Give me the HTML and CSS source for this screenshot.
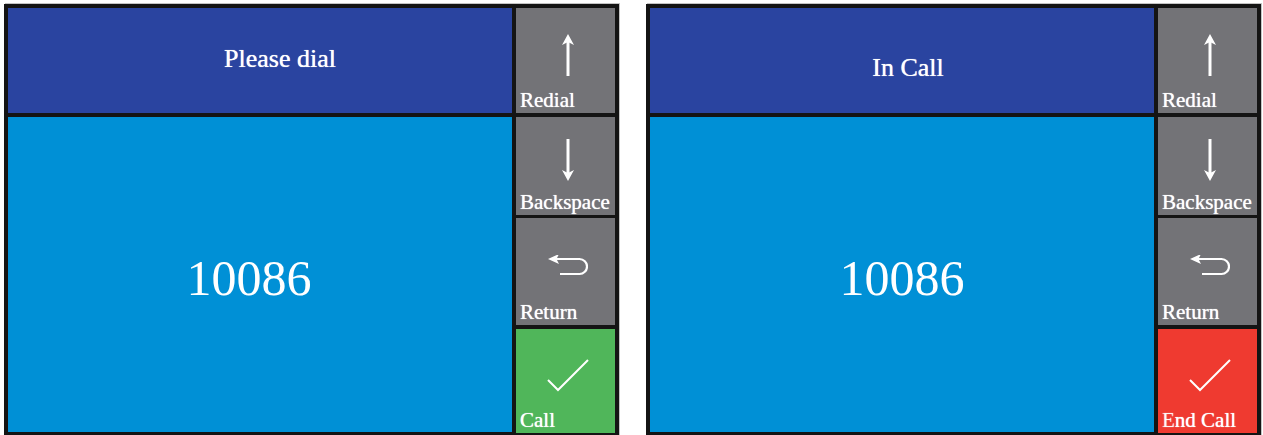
FILE: index.html
```html
<!DOCTYPE html>
<html>
<head>
    <title>Dial pad</title>
    <link rel="stylesheet" href="styles.css">
</head>
<body>
    <!-- Idle screen -->
    <div class="panel">
        <div class="main">
            <div class="title title-dial">Please dial</div>
            <div class="number number-dial">10086</div>
        </div>
        <div class="keys">
            <div class="key">
                <div class="key-icon">
                    <svg width="14" height="42" viewBox="0 0 14 42"><line x1="7" y1="42" x2="7" y2="7" stroke="#fff" stroke-width="3"/><polygon points="1,11 7,0 13,11 7,8" fill="#fff"/></svg>
                </div>
                <div class="key-label">Redial</div>
            </div>
            <div class="key">
                <div class="key-icon">
                    <svg width="14" height="42" viewBox="0 0 14 42"><line x1="7" y1="0" x2="7" y2="35" stroke="#fff" stroke-width="3"/><polygon points="1,31 7,42 13,31 7,34" fill="#fff"/></svg>
                </div>
                <div class="key-label">Backspace</div>
            </div>
            <div class="key">
                <div class="key-icon">
                    <svg width="40" height="21" viewBox="0 0 40 21"><path d="M7 4 H31.5 A7.5 7.5 0 0 1 31.5 19 H12" fill="none" stroke="#fff" stroke-width="2.2"/><polygon points="0,4 11,-1 8.5,4 11,9" fill="#fff"/></svg>
                </div>
                <div class="key-label">Return</div>
            </div>
            <div class="key key-call">
                <div class="key-icon">
                    <svg width="44" height="34" viewBox="0 0 44 34"><polyline points="2,22 12,32 42,2" fill="none" stroke="#fff" stroke-width="2"/></svg>
                </div>
                <div class="key-label">Call</div>
            </div>
        </div>
    </div>

    <!-- Active call screen -->
    <div class="panel">
        <div class="main">
            <div class="title title-call">In Call</div>
            <div class="number">10086</div>
        </div>
        <div class="keys">
            <div class="key">
                <div class="key-icon">
                    <svg width="14" height="42" viewBox="0 0 14 42"><line x1="7" y1="42" x2="7" y2="7" stroke="#fff" stroke-width="3"/><polygon points="1,11 7,0 13,11 7,8" fill="#fff"/></svg>
                </div>
                <div class="key-label">Redial</div>
            </div>
            <div class="key">
                <div class="key-icon">
                    <svg width="14" height="42" viewBox="0 0 14 42"><line x1="7" y1="0" x2="7" y2="35" stroke="#fff" stroke-width="3"/><polygon points="1,31 7,42 13,31 7,34" fill="#fff"/></svg>
                </div>
                <div class="key-label">Backspace</div>
            </div>
            <div class="key">
                <div class="key-icon">
                    <svg width="40" height="21" viewBox="0 0 40 21"><path d="M7 4 H31.5 A7.5 7.5 0 0 1 31.5 19 H12" fill="none" stroke="#fff" stroke-width="2.2"/><polygon points="0,4 11,-1 8.5,4 11,9" fill="#fff"/></svg>
                </div>
                <div class="key-label">Return</div>
            </div>
            <div class="key key-end">
                <div class="key-icon">
                    <svg width="44" height="34" viewBox="0 0 44 34"><polyline points="2,22 12,32 42,2" fill="none" stroke="#fff" stroke-width="2"/></svg>
                </div>
                <div class="key-label"><span class="faded">E</span>nd Call</div>
            </div>
        </div>
    </div>
</body>
</html>
```

FILE: styles.css
```css
body {
    margin: 0;
    padding: 4px 0 0 4px;
    display: flex;
    gap: 27px;
    background-color: #fff;
    font-family: "Liberation Serif", "DejaVu Serif", serif;
    color: #fff;
}
.panel {
    display: flex;
    gap: 4px;
    padding: 4px 4px 3px 4px;
    background-color: #141414;
    box-shadow: 1px -1px 0 #c4c4c4;
}
.main {
    width: 504px;
    display: flex;
    flex-direction: column;
    gap: 4px;
}
.title {
    height: 105px;
    background-color: #2a44a0;
    display: flex;
    justify-content: center;
    align-items: center;
    font-size: 26px;
    box-sizing: border-box;
    text-shadow: 0 0 0.7px #fff;
}
.title-dial {
    padding: 0 0 3px 40px;
}
.title-call {
    padding: 14px 0 0 12px;
}
.number {
    height: 315px;
    background-color: #0090d6;
    display: flex;
    justify-content: center;
    align-items: center;
    font-size: 50px;
    box-sizing: border-box;
    padding-top: 7px;
}
.number-dial {
    padding-right: 22px;
}
.keys {
    width: 99px;
    display: grid;
    grid-template-rows: 105px 98px 106px 104px;
    row-gap: 4px;
}
.keys .key:nth-child(3) {
    margin-top: -1px;
}
.key {
    background-color: #737377;
    display: flex;
    flex-direction: column;
}
.key-icon {
    flex: 1;
    display: flex;
    justify-content: center;
    align-items: center;
    padding: 11px 0 0 5px;
}
.key-icon svg {
    display: block;
}
.key-label {
    font-size: 21px;
    line-height: 21px;
    padding: 0 0 2px 4px;
    white-space: nowrap;
    text-shadow: 0 0 0.8px #fff;
}
.key-call {
    background-color: #50b65a;
}
.key-end {
    background-color: #ef3a30;
}
.faded {
    color: rgba(255, 255, 255, 0.55);
}
```
